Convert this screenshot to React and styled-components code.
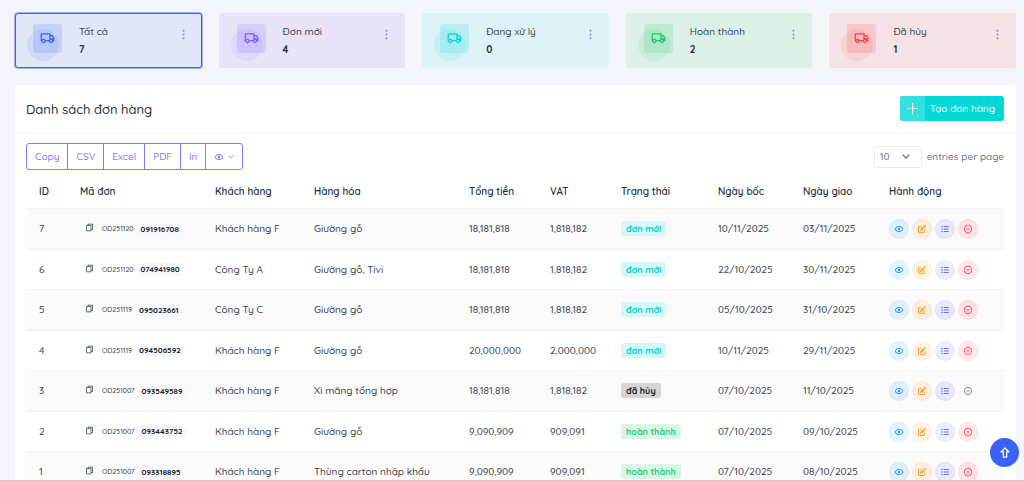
import React from 'react';
import styled, { createGlobalStyle, css } from 'styled-components';
import { RiTruckLine, RiMore2Fill, RiFileCopyLine } from 'react-icons/ri';
import { BiShow, BiMinusCircle } from 'react-icons/bi';
import { FaListUl, FaPenToSquare } from 'react-icons/fa6';

const GlobalStyle = createGlobalStyle`
  * {
    box-sizing: border-box;
  }

  body {
    margin: 0;
    background-color: #f4f5fa;
    color: #3b4650;
    font-family: Quicksand, Lato, 'Noto Sans', sans-serif;
    font-size: 10px;
    font-weight: 500;
    line-height: 16px;
  }

  button, select {
    font: inherit;
  }
`;

const Page = styled.main`
  height: 100vh;
  overflow-y: auto;
  scrollbar-width: none;
  padding: 13px 8px 0 15px;
  border-bottom: 1px solid #cfccc6;
`;

const Stats = styled.section`
  display: grid;
  grid-template-columns: repeat(5, 1fr);
  gap: 17px;
  margin-bottom: 17px;
`;

const StatCard = styled.article`
  display: flex;
  align-items: flex-start;
  min-height: 55px;
  padding: 10px 11px 8px 17px;
  border: 1px solid ${props => props.$active ? props.$color : 'transparent'};
  border-radius: 3px;
  background-color: ${props => props.$bg};
  box-shadow: 0 0 0 1px ${props => props.$active ? `${props.$color}77` : 'transparent'};
`;

const StatIcon = styled.span`
  position: relative;
  display: flex;
  justify-content: center;
  width: 29px;
  height: 29px;
  padding-top: 6px;
  margin-right: 17px;
  border-radius: 3px;
  color: ${props => props.$color};
  background-color: ${props => props.$color}28;

  & > svg {
    width: 15px;
    height: 15px;
  }

  &::before {
    content: '';
    position: absolute;
    top: 5px;
    left: -6px;
    width: 32px;
    height: 32px;
    border-radius: 50%;
    background-color: ${props => props.$color}18;
  }
`;

const StatBody = styled.div`
  flex: 1;
`;

const StatLabel = styled.h2`
  margin: 0 0 2px;
  font-size: 10px;
  font-weight: 500;
  line-height: 16px;
`;

const StatValue = styled.p`
  margin: 0;
  color: #26323d;
  font-weight: 700;
  line-height: 16px;
`;

const MoreButton = styled.button`
  display: flex;
  padding: 4px 0;
  border: none;
  background: none;
  color: #8f9bbd;

  & > svg {
    width: 13px;
    height: 13px;
  }
`;

const Panel = styled.section`
  border-radius: 4px 4px 0 0;
  background-color: white;
`;

const PanelHeader = styled.header`
  display: flex;
  align-items: center;
  justify-content: space-between;
  min-height: 48px;
  padding: 0 12px 0 11px;
  border-bottom: 1px solid #f2f3f8;
`;

const Title = styled.h1`
  margin: 0;
  color: #26323d;
  font-size: 13px;
  font-weight: 500;
`;

const CreateButton = styled.button`
  display: flex;
  align-items: center;
  height: 25px;
  padding: 0 9px 0 0;
  overflow: hidden;
  border: none;
  border-radius: 3px;
  background-color: #00d8d8;
  color: white;
`;

const CreateIcon = styled.span`
  display: flex;
  align-items: center;
  justify-content: center;
  width: 25px;
  height: 100%;
  margin-right: 5px;
  background-color: #33e0e0;
`;

const PanelBody = styled.div`
  padding: 10px 12px 0 11px;
`;

const Toolbar = styled.div`
  display: flex;
  align-items: center;
  justify-content: space-between;
`;

const ButtonGroup = styled.div`
  display: flex;
`;

const GroupButton = styled.button`
  display: flex;
  align-items: center;
  gap: 4px;
  height: 27px;
  padding: 0 8px;
  border: 1px solid #8b75ff;
  margin-left: -1px;
  background-color: white;
  color: #8b75ff;

  &:first-child {
    margin-left: 0;
    border-radius: 3px 0 0 3px;
  }

  &:last-child {
    border-radius: 0 3px 3px 0;
  }
`;

const Entries = styled.label`
  display: flex;
  align-items: center;
  gap: 5px;
  color: #6b7584;
`;

const SelectWrap = styled.span`
  display: grid;
  align-items: center;

  & > * {
    grid-area: 1 / 1;
  }

  & > svg {
    justify-self: end;
    margin-right: 12px;
    pointer-events: none;
  }
`;

const Select = styled.select`
  width: 48px;
  height: 22px;
  padding: 0 5px;
  appearance: none;
  border: 1px solid #e9eaf4;
  border-radius: 3px;
  background-color: white;
  color: #6b7584;
`;

const Table = styled.table`
  width: 100%;
  table-layout: fixed;
  border-collapse: separate;
  border-spacing: 0;
`;

const Th = styled.th`
  height: 39px;
  padding: 5px 0 0 13px;
  border-bottom: 1px solid #f2f3f6;
  color: #26323d;
  font-weight: 600;
  text-align: left;
  white-space: nowrap;
`;

const Tr = styled.tr`
  height: 40px;

  &:nth-child(odd) {
    height: 41px;
    background-color: #fafafa;
  }
`;

const Td = styled.td`
  padding: 0 0 0 13px;
  border-bottom: 1px solid #f2f3f6;
  white-space: nowrap;
`;

const OrderCode = styled.div`
  display: flex;
  align-items: center;
  padding-left: 5px;
  font-size: 7px;
`;

const CopyButton = styled.button`
  display: flex;
  padding: 0 0 3px;
  margin-right: 8px;
  border: none;
  background: none;
  color: #3b4650;
`;

const OrderNumber = styled.strong`
  padding: 0 3px;
  margin-left: 4px;
  border-radius: 3px;
  background-color: #f6f7fb;
  color: #1d2630;
  font-size: 8px;
  font-weight: 700;
  line-height: 13px;
`;

const badgeColors = {
  new: css`
    color: #00d0d0;
    background-color: #d6f7f7;
  `,
  cancelled: css`
    color: #222;
    background-color: #d5d5d5;
  `,
  done: css`
    color: #21cf70;
    background-color: #d8f6e5;
  `,
};

const Badge = styled.span`
  display: inline-block;
  padding: 0 5px;
  border-radius: 3px;
  font-size: 9px;
  font-weight: 700;
  line-height: 15px;
  ${props => badgeColors[props.$status]}
`;

const Actions = styled.div`
  display: flex;
  gap: 3px;
`;

const ActionButton = styled.button`
  display: flex;
  align-items: center;
  justify-content: center;
  width: 20px;
  height: 20px;
  padding: 0;
  border: 1px solid ${props => props.disabled ? 'transparent' : `${props.$color}10`};
  border-radius: 50%;
  color: ${props => props.disabled ? '#8a8a8a' : props.$color};
  background-color: ${props => props.disabled ? 'transparent' : `${props.$color}20`};
`;

const ScrollTop = styled.button`
  position: fixed;
  right: 5px;
  bottom: 14px;
  display: flex;
  align-items: center;
  justify-content: center;
  width: 29px;
  height: 29px;
  padding: 0;
  border: none;
  border-radius: 50%;
  background-color: #3b62f6;
  color: white;
`;

const stats = [
  { label: 'Tất cả', value: 7, color: '#3b62f6', bg: '#e1e6f9', active: true },
  { label: 'Đơn mới', value: 4, color: '#7b5cff', bg: '#e7e4f9' },
  { label: 'Đang xử lý', value: 0, color: '#00d8d8', bg: '#dbf2f7' },
  { label: 'Hoàn thành', value: 2, color: '#19c964', bg: '#dcf0e8' },
  { label: 'Đã hủy', value: 1, color: '#ff3b45', bg: '#f6e2e6' },
];

const columns = [
  { name: 'ID', width: 41 },
  { name: 'Mã đơn', width: 135 },
  { name: 'Khách hàng', width: 99 },
  { name: 'Hàng hóa', width: 155 },
  { name: 'Tổng tiền', width: 81 },
  { name: 'VAT', width: 71 },
  { name: 'Trạng thái', width: 97 },
  { name: 'Ngày bốc', width: 85 },
  { name: 'Ngày giao', width: 86 },
  { name: 'Hành động', width: 128 },
];

const statusNames = { new: 'đơn mới', cancelled: 'đã hủy', done: 'hoàn thành' };

const orders = [
  { id: 7, batch: 'OD251120', code: '091916708', customer: 'Khách hàng F', goods: 'Giường gỗ', total: '18,181,818', vat: '1,818,182', status: 'new', pickup: '10/11/2025', delivery: '03/11/2025' },
  { id: 6, batch: 'OD251120', code: '074941980', customer: 'Công Ty A', goods: 'Giường gỗ, Tivi', total: '18,181,818', vat: '1,818,182', status: 'new', pickup: '22/10/2025', delivery: '30/11/2025' },
  { id: 5, batch: 'OD251119', code: '095023661', customer: 'Công Ty C', goods: 'Giường gỗ', total: '18,181,818', vat: '1,818,182', status: 'new', pickup: '05/10/2025', delivery: '31/10/2025' },
  { id: 4, batch: 'OD251119', code: '094506592', customer: 'Khách hàng F', goods: 'Giường gỗ', total: '20,000,000', vat: '2,000,000', status: 'new', pickup: '10/11/2025', delivery: '29/11/2025' },
  { id: 3, batch: 'OD251007', code: '093549589', customer: 'Khách hàng F', goods: 'Xi măng tổng hợp', total: '18,181,818', vat: '1,818,182', status: 'cancelled', pickup: '07/10/2025', delivery: '11/10/2025' },
  { id: 2, batch: 'OD251007', code: '093443752', customer: 'Khách hàng F', goods: 'Giường gỗ', total: '9,090,909', vat: '909,091', status: 'done', pickup: '07/10/2025', delivery: '09/10/2025' },
  { id: 1, batch: 'OD251007', code: '093318895', customer: 'Khách hàng F', goods: 'Thùng carton nhập khẩu', total: '9,090,909', vat: '909,091', status: 'done', pickup: '07/10/2025', delivery: '08/10/2025' },
];

const Chevron = ({ width, strokeWidth }) => (
  <svg width={width} viewBox="0 0 8 5" fill="none" stroke="currentColor" strokeWidth={strokeWidth} strokeLinecap="round">
    <path d="M1 1l3 3 3-3" />
  </svg>
);

const OrderRow = ({ order }) => (
  <Tr>
    <Td>{order.id}</Td>
    <Td>
      <OrderCode>
        <CopyButton aria-label="Copy"><RiFileCopyLine size={9} /></CopyButton>
        {order.batch}
        <OrderNumber>{order.code}</OrderNumber>
      </OrderCode>
    </Td>
    <Td>{order.customer}</Td>
    <Td>{order.goods}</Td>
    <Td>{order.total}</Td>
    <Td>{order.vat}</Td>
    <Td><Badge $status={order.status}>{statusNames[order.status]}</Badge></Td>
    <Td>{order.pickup}</Td>
    <Td>{order.delivery}</Td>
    <Td>
      <Actions>
        <ActionButton $color="#2da1f8" aria-label="View"><BiShow size={10} /></ActionButton>
        <ActionButton $color="#ff9f2e" aria-label="Edit"><FaPenToSquare size={8} /></ActionButton>
        <ActionButton $color="#6b6ef8" aria-label="Tasks"><FaListUl size={8} /></ActionButton>
        <ActionButton $color="#ff4a55" aria-label="Cancel" disabled={order.status === 'cancelled'}>
          <BiMinusCircle size={10} />
        </ActionButton>
      </Actions>
    </Td>
  </Tr>
);

const App = () => {
  return (
    <>
      <GlobalStyle />
      <Page>
        <Stats>
          {stats.map(stat => (
            <StatCard key={stat.label} $color={stat.color} $bg={stat.bg} $active={stat.active}>
              <StatIcon $color={stat.color}><RiTruckLine /></StatIcon>
              <StatBody>
                <StatLabel>{stat.label}</StatLabel>
                <StatValue>{stat.value}</StatValue>
              </StatBody>
              <MoreButton aria-label="More"><RiMore2Fill /></MoreButton>
            </StatCard>
          ))}
        </Stats>
        <Panel>
          <PanelHeader>
            <Title>Danh sách đơn hàng</Title>
            <CreateButton>
              <CreateIcon>
                <svg width="11" height="11" viewBox="0 0 11 11" stroke="currentColor">
                  <path d="M5.5 0v11M0 5.5h11" />
                </svg>
              </CreateIcon>
              Tạo đơn hàng
            </CreateButton>
          </PanelHeader>
          <PanelBody>
            <Toolbar>
              <ButtonGroup>
                <GroupButton>Copy</GroupButton>
                <GroupButton>CSV</GroupButton>
                <GroupButton>Excel</GroupButton>
                <GroupButton>PDF</GroupButton>
                <GroupButton>In</GroupButton>
                <GroupButton aria-label="Columns">
                  <BiShow size={10} />
                  <Chevron width={6} strokeWidth={1} />
                </GroupButton>
              </ButtonGroup>
              <Entries>
                <SelectWrap>
                  <Select defaultValue="10">
                    <option>10</option>
                    <option>25</option>
                    <option>50</option>
                  </Select>
                  <Chevron width={8} strokeWidth={1.3} />
                </SelectWrap>
                entries per page
              </Entries>
            </Toolbar>
            <Table>
              <colgroup>
                {columns.map(col => <col key={col.name} width={col.width} />)}
              </colgroup>
              <thead>
                <tr>{columns.map(col => <Th key={col.name}>{col.name}</Th>)}</tr>
              </thead>
              <tbody>
                {orders.map(order => <OrderRow key={order.id} order={order} />)}
              </tbody>
            </Table>
          </PanelBody>
        </Panel>
      </Page>
      <ScrollTop aria-label="Back to top">
        <svg width="10" height="11" viewBox="0 0 11 12" fill="none" stroke="currentColor" strokeWidth="1.4" strokeLinejoin="round">
          <path d="M5.5 1 1.2 5.4h2.5V11h3.6V5.4h2.5z" />
        </svg>
      </ScrollTop>
    </>
  );
};

export default App;
